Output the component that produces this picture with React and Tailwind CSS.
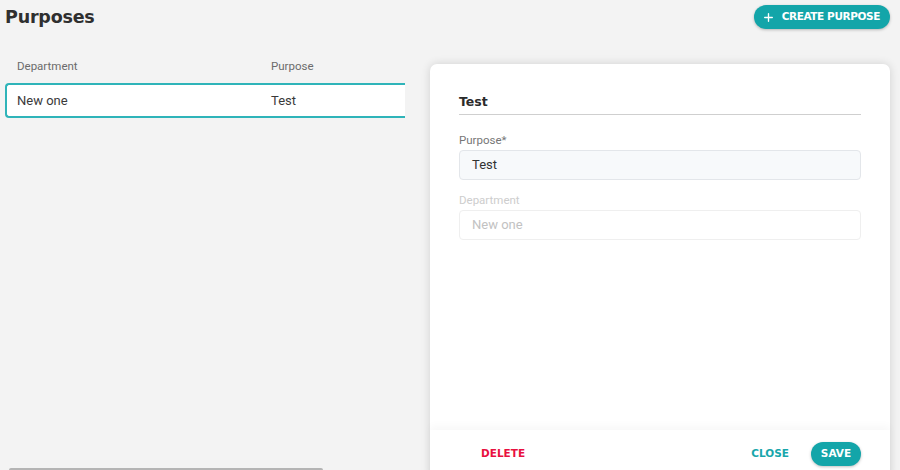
import { Plus } from "lucide-react";

const head = { fontFamily: '"DejaVu Sans", "Open Sans", sans-serif' };
const body = { fontFamily: 'Roboto, "Liberation Sans", sans-serif' };

export default function App() {
  return (
    <div className="h-[470px] w-[900px] overflow-hidden bg-[#f3f3f3] relative" style={body}>
      {/* top bar */}
      <div className="flex items-center justify-between pl-[5px] pr-[10px] pt-[5px] h-[29px]">
        <h1 className="text-[17.5px] font-bold text-[#2f2f2f] tracking-[-0.2px]" style={head}>Purposes</h1>
        <button className="flex items-center gap-[7px] h-[24px] pl-[8px] pr-[10px] rounded-full bg-[#13a5a9] text-white text-[10.5px] font-bold tracking-[-0.4px] shadow-[0_1px_3px_rgba(0,0,0,0.25)]" style={head}>
          <Plus size={13} strokeWidth={2.5} />
          CREATE PURPOSE
        </button>
      </div>

      <div className="flex mt-[29px]">
        {/* table */}
        <div className="w-[405px] pl-[5px]">
          <div className="flex text-[11.5px] leading-[16px] text-[#6b6b6b] h-[25px]">
            <div className="w-[266px] pl-[12px]">Department</div>
            <div>Purpose</div>
          </div>
          <div className="flex items-center h-[35px] bg-white border-2 border-r-0 border-[#2fb4b9] rounded-l-[4px] text-[13px] text-[#3a3a3a]">
            <div className="w-[264px] pl-[10px]">New one</div>
            <div>Test</div>
          </div>
        </div>

        {/* side panel */}
        <div className="ml-[25px] mt-[6px] w-[460px] h-[414px] bg-white rounded-t-[7px] shadow-[0_0_10px_rgba(0,0,0,0.14)] flex flex-col">
          <div className="flex-1 px-[29px] pt-[30px]">
            <div className="text-[12.5px] leading-[16px] font-bold text-[#2b2b2b] pb-[4px] border-b border-[#cfcfcf]" style={head}>Test</div>
            <div className="mt-[18px] text-[11.5px] leading-[14px] text-[#767676]">Purpose*</div>
            <div className="mt-[3px] h-[30px] flex items-center pl-[12px] bg-[#f7f9fb] border border-[#e3e6ea] rounded-[4px] text-[13px] text-[#333]">Test</div>
            <div className="mt-[13px] text-[11.5px] leading-[14px] text-[#cdcdcd]">Department</div>
            <div className="mt-[3px] h-[30px] flex items-center pl-[12px] bg-white border border-[#efefef] rounded-[4px] text-[13px] text-[#c2c2c2]">New one</div>
          </div>
          <div className="h-[48px] flex items-center px-[29px] shadow-[0_-4px_8px_rgba(0,0,0,0.03)]">
            <button className="ml-[22px] text-[10.5px] font-bold text-[#e8103f]" style={head}>DELETE</button>
            <button className="ml-auto mr-[22px] text-[10.5px] font-bold text-[#18a6ab]" style={head}>CLOSE</button>
            <button className="h-[24px] w-[50px] rounded-full bg-[#13a5a9] text-white text-[10.5px] font-bold shadow-[0_1px_3px_rgba(0,0,0,0.25)]" style={head}>SAVE</button>
          </div>
        </div>
      </div>

      {/* horizontal scrollbar thumb */}
      <div className="absolute left-[9px] bottom-0 w-[314px] h-[2px] bg-[#b4b4b4] rounded-t-sm" />
    </div>
  );
}
